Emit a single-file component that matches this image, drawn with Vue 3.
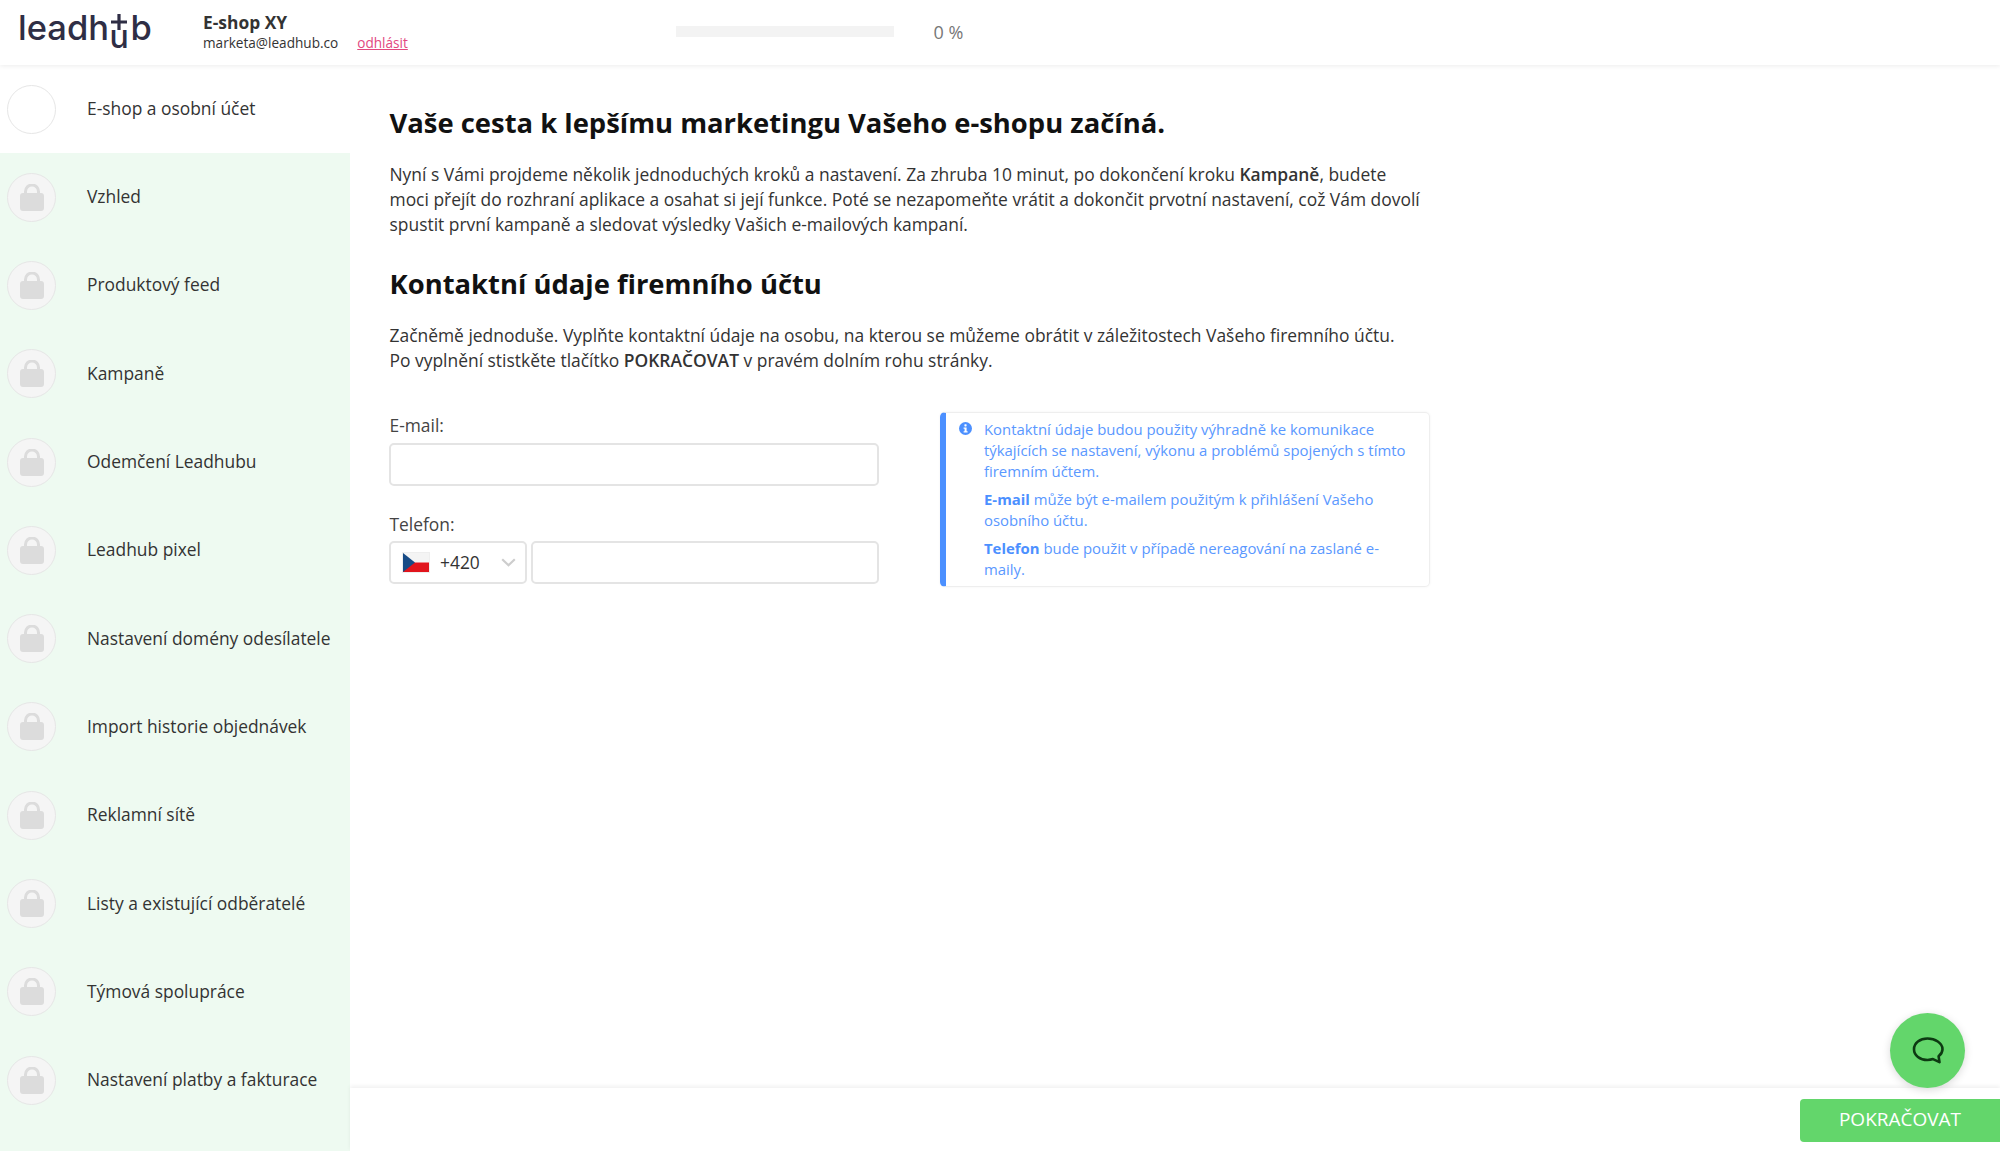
<script setup>
const steps = [
  'E-shop a osobní účet', 'Vzhled', 'Produktový feed', 'Kampaně', 'Odemčení Leadhubu', 'Leadhub pixel',
  'Nastavení domény odesílatele', 'Import historie objednávek', 'Reklamní sítě',
  'Listy a existující odběratelé', 'Týmová spolupráce', 'Nastavení platby a fakturace'
]
</script>

<template>
  <div class="app">
    <header class="top">
      <div class="logo">
        <span>leadh</span>
        <span class="logo-u">
          <svg class="logo-plus" width="16" height="16" viewBox="0 0 16 16"><path d="M8 0v16M0 8h16" stroke="#2f2e45" stroke-width="3.200" fill="none" /></svg>
          <span class="logo-u-letter">u</span>
        </span>
        <span>b</span>
      </div>
      <div class="account">
        <div class="shop">E-shop XY</div>
        <div class="mail-row"><span>marketa@leadhub.co</span><a class="logout">odhlásit</a></div>
      </div>
      <div class="progress"></div>
      <div class="percent">0 %</div>
    </header>

    <div class="body">
      <nav class="side">
        <div v-for="(s, i) in steps" :key="s" class="step" :class="{ active: i === 0 }">
          <div class="circle">
            <svg v-if="i > 0" width="24" height="27" viewBox="0 0 24 27">
              <path d="M5.5 10V7.5a6.5 6.5 0 0 1 13 0V10" fill="none" stroke="#dcdcdc" stroke-width="3" />
              <rect x="0" y="9" width="24" height="18" rx="3" fill="#dcdcdc" />
            </svg>
          </div>
          <span class="step-label">{{ s }}</span>
        </div>
      </nav>

      <div class="right">
        <main class="main">
          <h1>Vaše cesta k lepšímu marketingu Vašeho e-shopu začíná.</h1>
          <p class="text">Nyní s Vámi projdeme několik jednoduchých kroků a nastavení. Za zhruba 10 minut, po dokončení kroku <b>Kampaně</b>, budete<br>moci přejít do rozhraní aplikace a osahat si její funkce. Poté se nezapomeňte vrátit a dokončit prvotní nastavení, což Vám dovolí<br>spustit první kampaně a sledovat výsledky Vašich e-mailových kampaní.</p>
          <h2>Kontaktní údaje firemního účtu</h2>
          <p class="text">Začněmě jednoduše. Vyplňte kontaktní údaje na osobu, na kterou se můžeme obrátit v záležitostech Vašeho firemního účtu.<br>Po vyplnění stistkěte tlačítko <b>POKRAČOVAT</b> v pravém dolním rohu stránky.</p>

          <div class="form-row">
            <form class="form">
              <label>E-mail:</label>
              <input class="field" type="text">
              <label class="second">Telefon:</label>
              <div class="phone">
                <div class="select">
                  <svg class="flag" width="26" height="19" viewBox="0 0 26 19">
                    <rect width="26" height="9.5" fill="#f4f4f4" />
                    <rect y="9.5" width="26" height="9.5" fill="#e1141c" />
                    <path d="M0 0l12 9.5L0 19z" fill="#174b86" />
                  </svg>
                  <span>+420</span>
                  <svg class="chev" width="15" height="9" viewBox="0 0 15 9"><path d="M1.2 1.2l6.3 6 6.3-6" fill="none" stroke="#cdcdcd" stroke-width="2.2" /></svg>
                </div>
                <input class="field tel" type="text">
              </div>
            </form>

            <aside class="info">
              <svg class="info-icon" width="13" height="13" viewBox="0 0 13 13">
                <circle cx="6.5" cy="6.5" r="6.5" fill="#4c90ff" />
                <rect x="5.4" y="2.2" width="2.2" height="2.2" rx=".6" fill="#fff" />
                <path d="M4.6 5.4h3v3.9h1v1.3H4.600V9.300h1V6.700h-1z" fill="#fff" />
              </svg>
              <div class="info-text">
                <p>Kontaktní údaje budou použity výhradně ke komunikace týkajících se nastavení, výkonu a problémů spojených s tímto firemním účtem.</p>
                <p><b>E-mail</b> může být e-mailem použitým k přihlášení Vašeho<br>osobního účtu.</p>
                <p><b>Telefon</b> bude použit v případě nereagování na zaslané e-<br>maily.</p>
              </div>
            </aside>
          </div>
        </main>
        <footer class="foot">
          <button class="next" type="button">POKRAČOVAT</button>
        </footer>
      </div>
    </div>

    <div class="chat">
      <svg width="32" height="29" viewBox="0 0 32 29">
        <path d="M15.5 2.500C8 2.500 2 7 2 13.200S8 24 15.500 24c2 0 3.800-.3 5.500-.9l6.500 3-.9-5.800C29 18.300 30.500 16 30.500 13.200 30.500 7 23 2.500 15.500 2.500z" fill="none" stroke="#0d3a12" stroke-width="2.600" stroke-linejoin="round" />
      </svg>
    </div>
  </div>
</template>

<style scoped>
.app { position: relative; width: 2000px; height: 1151px; overflow: hidden; background: #fff; color: #333; font-family: "Open Sans", "Liberation Sans", sans-serif; font-size: 17.4px; }
.top { height: 65px; display: flex; align-items: center; position: relative; z-index: 2; box-shadow: 0 1px 5px rgba(0, 0, 0, .08); background: #fff; box-sizing: border-box; padding: 0 0 2px 18px; }
.logo { width: 185px; height: 40px; align-self: flex-start; margin-top: 7.5px; display: flex; font-family: Inter, sans-serif; font-size: 34.500px; font-weight: 500; line-height: 40px; color: #2f2e45; }
.logo-u { position: relative; display: block; width: 20.500px; height: 40px; margin-left: 1px; }
.logo-plus { position: absolute; left: 1.500px; top: 6.500px; }
.logo-u-letter { position: absolute; left: -.5px; top: 13.900px; font-size: 32px; line-height: 32px; }
.account { width: 472.500px; }
.shop { font-weight: 700; font-size: 17.4px; line-height: 22px; color: #333; }
.mail-row { font-size: 13.600px; line-height: 19px; display: flex; gap: 19px; color: #333; }
.logout { color: #e2487f; text-decoration: underline; }
.progress { width: 218px; height: 11px; background: #f3f3f3; }
.percent { margin-left: 40px; color: #777; font-size: 18px; }
.body { display: flex; height: 1086px; }
.side { width: 350px; background: #eefaf1; flex: none; }
.step { height: 88.300px; display: flex; align-items: center; padding-left: 7px; box-sizing: border-box; }
.step.active { background: #fff; height: 88px; }
.step-label { margin-top: -2px; }
.circle { width: 49px; height: 49px; box-sizing: border-box; border-radius: 50%; border: 1.500px solid #e6e6e6; background: #f5f5f5; display: flex; align-items: center; justify-content: center; margin-right: 31px; flex: none; }
.active .circle { background: #fff; }
.right { flex: 1; display: flex; flex-direction: column; }
.main { flex: 1; padding: 0 0 0 39.500px; }
h1 { margin: 39px 0 0; font-size: 27.400px; line-height: 38px; font-weight: 700; color: #111; }
h2 { margin: 28px 0 0; font-size: 27.400px; line-height: 38px; font-weight: 700; color: #111; }
.text { margin: 20px 0 0; font-size: 17.430px; line-height: 25px; color: #333; white-space: nowrap; }
.text b { font-weight: 600; }
.form-row { display: flex; margin-top: 40px; }
.form { width: 490px; display: flex; flex-direction: column; margin-left: -.5px; }
label { line-height: 24px; color: #444; margin-bottom: 6px; padding-left: .5px; }
.second { margin-top: 26px; margin-bottom: 5px; }
.field { box-sizing: border-box; height: 43px; width: 100%; border: 2px solid #e4e4e4; border-radius: 5px; background: #fff; display: block; outline: none; }
.phone { display: flex; gap: 4px; }
.select { box-sizing: border-box; width: 138px; height: 43px; border: 2px solid #e4e4e4; border-radius: 5px; display: flex; align-items: center; padding: 0 0 1px 12px; flex: none; }
.flag { margin-right: 11px; box-shadow: 0 0 0 1px #eee; }
.chev { margin-left: 21px; }
.tel { flex: 1; width: auto; min-width: 0; }
.info { margin-left: 61px; width: 490px; height: 175px; box-sizing: border-box; margin-top: -1px; border: 1px solid #eee; border-left: 6px solid #4c90ff; border-radius: 5px; display: flex; padding: 5.500px 14px 0 13px; font-size: 14.900px; line-height: 21px; color: #5a98ff; box-shadow: 0 0 3px rgba(0, 0, 0, .05); }
.info-icon { flex: none; margin-right: 12px; margin-top: 3px; }
.info-text p { margin: 0 0 7px; }
.info-text b { font-weight: 700; color: #4c90ff; }
.foot { height: 63px; background: #fff; box-shadow: 0 -2px 4px rgba(0, 0, 0, .06); display: flex; justify-content: flex-end; align-items: flex-start; padding-top: 10.500px; box-sizing: border-box; }
.next { width: 200px; height: 43px; padding: 0 0 3px; border: none; background: #63d66b; color: #fff; border-radius: 4px 0 0 4px; font-family: inherit; font-size: 19px; font-weight: 500; }
.chat { position: absolute; left: 1890px; top: 1013px; width: 75px; height: 75px; border-radius: 50%; background: #63d66b; box-shadow: 0 2px 8px rgba(0, 0, 0, .15); display: flex; align-items: center; justify-content: center; }
</style>

<style>
html, body { margin: 0; background: #fff; }
</style>
